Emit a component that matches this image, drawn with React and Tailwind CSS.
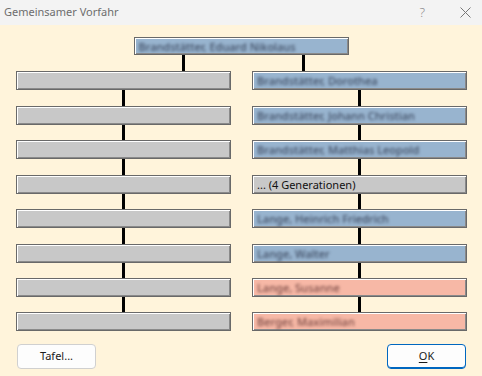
const leftRows = 8;

const rightRows = [
    { kind: 'blue', text: 'Brandstätter, Dorothea' },
    { kind: 'blue', text: 'Brandstätter, Johann Christian' },
    { kind: 'blue', text: 'Brandstätter, Matthias Leopold' },
    { kind: 'gray', text: '... (4 Generationen)', plain: true },
    { kind: 'blue', text: 'Lange, Heinrich Friedrich' },
    { kind: 'blue', text: 'Lange, Walter' },
    { kind: 'pink', text: 'Lange, Susanne' },
    { kind: 'pink', text: 'Berger, Maximilian' },
];

// connector heights between boxes (rows don't sit on an even pixel step)
const gaps = ['h-[16px]', 'h-[15px]', 'h-[16px]', 'h-[15px]', 'h-[16px]', 'h-[15px]', 'h-[15px]'];

const fills = {
    gray: 'bg-[#c8c8c8]',
    blue: 'bg-[#98b4cf]',
    pink: 'bg-[#f7b8a6]',
};

const blurText = {
    gray: 'text-[#555]',
    blue: 'text-[#3f4c63] blur-[1.6px]',
    pink: 'text-[#7a4a45] blur-[1.6px]',
};

function Box({ kind, text, plain, height = 'h-[19px]' }) {
    return (
        <div
            className={`w-[215px] ${height} ${fills[kind]} border border-[#696969] shadow-[inset_1px_1px_0_#ffffff,inset_-1px_-1px_0_#8a8a8a] flex items-center pl-[4px] overflow-hidden`}
        >
            {text && (
                <span
                    className={`text-[11px] font-medium leading-none whitespace-nowrap ${plain ? 'text-[#111] font-normal' : blurText[kind]}`}
                >
                    {text}
                </span>
            )}
        </div>
    );
}

function Line({ h }) {
    return <div className={`w-[3px] ${h} bg-black`} />;
}

export default function App() {
    return (
        <div
            className="w-[482px] h-[376px] flex flex-col bg-[#fff4db] overflow-hidden"
            style={{ fontFamily: '"Noto Sans", "Liberation Sans", sans-serif' }}
        >
            {/* Title bar */}
            <div className="h-[25px] bg-[#f3f3f3] flex items-center pl-[4px] pr-[10px]">
                <span className="text-[11px] text-[#6d6d6d]">Gemeinsamer Vorfahr</span>
                <span className="ml-auto mr-[35px] text-[13px] font-light text-[#888]">?</span>
                <svg width="11" height="11" viewBox="0 0 11 11" className="mr-[1px]">
                    <path d="M0.5 0.5 L10.5 10.5 M10.5 0.5 L0.5 10.5" stroke="#777" strokeWidth="1" />
                </svg>
            </div>

            {/* Body */}
            <div className="flex-1 flex flex-col pt-[12px] px-[16px]">
                {/* Common ancestor */}
                <div className="flex flex-col items-center">
                    <Box kind="blue" text="Brandstätter, Eduard Nikolaus" height="h-[18px]" />
                    <div className="w-[215px] flex">
                        <div className="ml-[48px]">
                            <Line h="h-[16px]" />
                        </div>
                        <div className="ml-[117px]">
                            <Line h="h-[16px]" />
                        </div>
                    </div>
                </div>

                {/* Two lines of descent */}
                <div className="flex justify-between">
                    <div className="flex flex-col items-center">
                        {Array.from({ length: leftRows }).map((_, i) => (
                            <div key={i} className="flex flex-col items-center">
                                <Box kind="gray" />
                                {i < leftRows - 1 && <Line h={gaps[i]} />}
                            </div>
                        ))}
                    </div>
                    <div className="flex flex-col items-center mr-[-1px]">
                        {rightRows.map((r, i) => (
                            <div key={i} className="flex flex-col items-center">
                                <Box {...r} />
                                {i < rightRows.length - 1 && <Line h={gaps[i]} />}
                            </div>
                        ))}
                    </div>
                </div>

                {/* Buttons */}
                <div className="flex justify-between mt-[13px] pl-[1px]">
                    <button className="w-[79px] h-[25px] rounded-[4px] border border-[#d0d0d0] bg-[#fdfdfd] text-[11px] text-[#1a1a1a]">
                        Tafel...
                    </button>
                    <button className="w-[79px] h-[25px] rounded-[4px] border border-[#0067c0] bg-[#fdfdfd] text-[11px] text-[#1a1a1a] shadow-[inset_0_-1px_0_#0067c0]">
                        <span className="underline underline-offset-2">O</span>K
                    </button>
                </div>
            </div>
        </div>
    );
}
